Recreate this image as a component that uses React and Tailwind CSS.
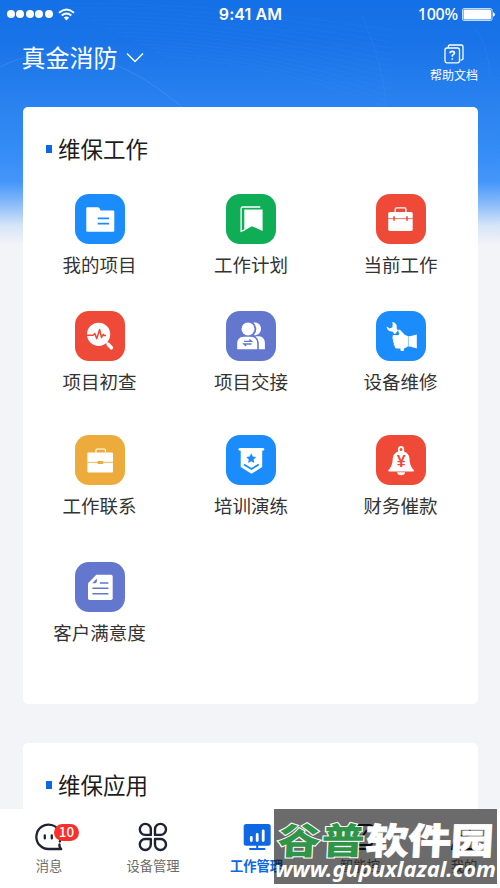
const services = [
  { name: "我的项目", bg: "bg-[#1b8cfb]", icon: FolderIcon },
  { name: "工作计划", bg: "bg-[#0fad56]", icon: BookmarkIcon },
  { name: "当前工作", bg: "bg-[#ef4a37]", icon: ToolboxIcon },
  { name: "项目初查", bg: "bg-[#ef4a37]", icon: InspectIcon },
  { name: "项目交接", bg: "bg-[#6377cf]", icon: HandoverIcon },
  { name: "设备维修", bg: "bg-[#1b8cfb]", icon: RepairIcon },
  { name: "工作联系", bg: "bg-[#ecab3a]", icon: BriefcaseIcon },
  { name: "培训演练", bg: "bg-[#1b8cfb]", icon: BadgeIcon },
  { name: "财务催款", bg: "bg-[#ef4a37]", icon: BellIcon },
  { name: "客户满意度", bg: "bg-[#6377cf]", icon: DocIcon },
];

const tabs = [
  { name: "消息", icon: ChatIcon, badge: 10 },
  { name: "设备管理", icon: CloverIcon },
  { name: "工作管理", icon: BoardIcon, active: true },
  { name: "智能控", icon: ControlIcon },
  { name: "我的", icon: UserIcon },
];

export default function App() {
  return (
    <div className="relative flex h-[888px] w-[500px] flex-col overflow-hidden bg-[#f3f4f8] font-['Noto_Sans_CJK_SC',sans-serif]">
      <Backdrop />
      <StatusBar />
      <Header />
      <main className="relative min-h-0 flex-1 overflow-hidden px-[22.5px]">
        <section className="h-[597px] rounded-[5px] bg-white">
          <SectionTitle>维保工作</SectionTitle>
          <div className="grid grid-cols-[154px_149px_150px] grid-rows-[117px_123.5px_127px_100px] pt-[28px]">
            {services.map((item) => (
              <Service key={item.name} {...item} />
            ))}
          </div>
        </section>
        <section className="mt-[39px] h-40 rounded-[5px] bg-white">
          <SectionTitle>维保应用</SectionTitle>
        </section>
      </main>
      <TabBar />
      <Watermark />
    </div>
  );
}

// blue header area with faint wave lines, fading into the page grey
function Backdrop() {
  return (
    <div className="absolute inset-x-0 top-0 h-[245px] bg-[linear-gradient(180deg,#1470e6_0px,#1973e8_40px,#2a83ef_107px,#348cf6_150px,#4596fa_182px,#8dbdf9_205px,#d4e4f8_225px,#f3f4f8_245px)]">
      <svg className="h-[107px] w-full" viewBox="0 0 500 107" fill="none" stroke="#fff">
        <path d="M0 67Q85 25 182 107" strokeOpacity=".1" />
        <path d="M362 15Q385 70 386 107M475 28Q488 45 490 75" strokeOpacity=".04" />
        {Array.from({ length: 14 }, (_, i) => (
          <path key={i} d={`M${60 + i * 8} ${4 + i * 4}Q${200 + i * 6} ${i * 5} ${390} ${30 + i * 6}`} strokeOpacity=".025" />
        ))}
      </svg>
    </div>
  );
}

function StatusBar() {
  return (
    <div className="relative grid h-7 grid-cols-3 items-center pl-[7px] pr-[5px] text-white">
      <div className="flex items-center gap-[1.4px]">
        {[0, 1, 2, 3, 4].map((dot) => (
          <span key={dot} className="size-2 rounded-full bg-white" />
        ))}
        <svg className="ml-1 h-[13px] w-[17px]" viewBox="0 0 17 13" fill="none" stroke="#fff" strokeWidth="1.9">
          <path d="M1 4.7Q8.5-1.8 16 4.7M3.7 7.4Q8.5 3.4 13.3 7.4" />
          <path d="M5.8 9.6Q8.5 7.5 11.2 9.6L8.5 12.5Z" fill="#fff" stroke="none" />
        </svg>
      </div>
      <span className="-ml-px pb-px text-center font-['Inter',sans-serif] text-[16px] font-semibold leading-none tracking-[0.1px]">9:41 AM</span>
      <div className="flex items-center justify-end gap-[4px]">
        <span className="font-['Noto_Sans',sans-serif] text-[16px] font-medium leading-none tracking-[-0.2px]">100%</span>
        <svg className="h-[13px] w-[33px]" viewBox="0 0 33 13" fill="#fff">
          <rect x=".5" y=".5" width="29.5" height="12" rx="1.5" fill="none" stroke="#fff" strokeOpacity=".75" />
          <rect x="1.5" y="1.5" width="27.5" height="10" rx="1" />
          <path d="M31 4.3Q33 5 33 6.5T31 8.7Z" />
        </svg>
      </div>
    </div>
  );
}

function Header() {
  return (
    <header className="relative flex h-[79px] items-start justify-between pl-[21.5px] pr-[22px] text-white">
      <div className="flex items-center gap-[8px] pt-[11px]">
        <h1 className="text-[24px] leading-9">真金消防</h1>
        <svg className="h-[11px] w-[18px]" viewBox="0 0 18 11" fill="none" stroke="#fff" strokeWidth="1.4">
          <path d="M1 1.5L9 9.5L17 1.5" />
        </svg>
      </div>
      <div className="flex flex-col items-center pt-[16px]">
        <svg className="h-5 w-5" viewBox="0 0 20 20" fill="none" stroke="#fff" strokeWidth="1.3">
          <rect x="1" y="4" width="14.5" height="14.8" rx="2" />
          <path d="M4.3 3.5V2.8Q4.3 1 6 1H17Q19 1 19 3V14.5Q19 16 16.5 16" />
          <path d="M6 9.2Q6 7.4 8.2 7.4T10.5 9.1Q10.5 10.3 8.3 11.4V12.8M8.3 14.2V15.8" strokeWidth="1.6" />
        </svg>
        <span className="mt-0.5 text-[12px] leading-[18px]">帮助文档</span>
      </div>
    </header>
  );
}

function SectionTitle({ children }) {
  return (
    <div className="flex items-center gap-[6px] pl-[23.5px] pt-[24px]">
      <span className="h-2 w-1.5 bg-[#0d66e4]" />
      <h2 className="-mt-px text-[22.5px] leading-9 text-[#1c1c1c]">{children}</h2>
    </div>
  );
}

function Service({ name, bg, icon: Icon }) {
  return (
    <div className="flex flex-col items-center">
      <div className={`size-[50px] shrink-0 rounded-[14px] ${bg}`}>
        <Icon />
      </div>
      <span className="mt-[6px] whitespace-nowrap text-[18.5px] leading-7 text-[#333]">{name}</span>
    </div>
  );
}

function TabBar() {
  return (
    <nav className="relative grid h-[79px] shrink-0 grid-cols-[98px_110px_97px_110px_98px] bg-white">
      {tabs.map(({ name, icon: Icon, active, badge }) => (
        <div key={name} className="flex flex-col items-center pt-[13px]">
          <div className="relative">
            <Icon />
            {badge && (
              <span className="absolute left-[20px] top-[1.5px] flex h-[17px] w-[25px] items-center justify-center rounded-full bg-[#f8302b] text-[13.5px] font-medium leading-none text-white">
                {badge}
              </span>
            )}
          </div>
          <span className={`mt-[4px] whitespace-nowrap text-[13.3px] leading-5 ${active ? "font-bold text-[#0e68e4]" : "text-[#6b6b6b]"}`}>
            {name}
          </span>
        </div>
      ))}
    </nav>
  );
}

function Watermark() {
  return (
    <div className="absolute left-[273.5px] top-[809px] h-[75px] w-[223.5px] bg-[#000]/58">
      <svg className="h-full w-full" viewBox="0 0 223.5 75">
        <g className="font-['Noto_Sans_CJK_SC',sans-serif] font-black" fontSize="43" transform="translate(3 44.5) skewX(-3) scale(1 .84)">
          <text fill="#2f9548" stroke="#fff" strokeWidth="2.4" paintOrder="stroke" textLength="87">谷普</text>
          <text x="88" fill="#fff" stroke="#fff" strokeWidth=".8" textLength="128">软件园</text>
        </g>
        <text x="1" y="67.5" fill="#fff" className="font-['Noto_Sans',sans-serif] font-bold italic" fontSize="21.5" textLength="221" lengthAdjust="spacingAndGlyphs">
          www.gupuxlazal.com
        </text>
      </svg>
    </div>
  );
}

/* service icons, drawn on the 50px tile */

function FolderIcon() {
  return (
    <svg viewBox="0 0 50 50" fill="#fff">
      <path d="M12.3 13.3H23Q24.2 13.3 24.8 14.8L25.5 16.5H38.3Q39.3 16.5 39.3 17.5V36.7Q39.3 37.7 38.3 37.7H12.3Q11.3 37.7 11.3 36.7V14.3Q11.3 13.3 12.3 13.3Z" />
      <path d="M22.7 24.3H34M22.7 29.6H34" stroke="#1b8cfb" strokeWidth="1.8" />
    </svg>
  );
}

function BookmarkIcon() {
  return (
    <svg viewBox="0 0 50 50" fill="#fff">
      <path d="M18.3 15.6H36.6V37L26 32.2L18.3 36.6Z" />
      <path d="M34.3 13H16.8Q15.1 13 15.1 14.7V37.2L18.8 35.8" fill="none" stroke="#fff" strokeWidth="1.3" />
    </svg>
  );
}

function ToolboxIcon() {
  return (
    <svg viewBox="0 0 50 50" fill="#fff">
      <rect x="12.2" y="17.9" width="24.5" height="19" rx="1.6" />
      <path d="M19.3 18V15.2Q19.3 13.9 20.6 13.9H28.6Q29.9 13.9 29.9 15.2V18" fill="none" stroke="#fff" strokeWidth="1.4" />
      <path d="M12 24.6H37" stroke="#ef4a37" strokeWidth=".8" />
      <path d="M18 22.3V26.8M31 22.3V26.8" stroke="#ef4a37" strokeWidth="1.6" />
    </svg>
  );
}

function InspectIcon() {
  return (
    <svg viewBox="0 0 50 50" fill="none">
      <circle cx="23.6" cy="23.3" r="11.6" fill="#fff" />
      <path d="M31 31L33.5 33.6" stroke="#fff" strokeWidth="1.5" />
      <path d="M33.3 33.5L36.4 36.8" stroke="#fff" strokeWidth="3.6" strokeLinecap="round" />
      <path d="M11.5 24.3H18L19.8 22.6L21.8 27.6L24.6 18.5L26.5 26.5L28.3 23.3L29.2 24.5H31" stroke="#ef4a37" strokeWidth="1.5" strokeLinejoin="round" />
    </svg>
  );
}

function HandoverIcon() {
  return (
    <svg viewBox="0 0 50 50" fill="#fff">
      <path d="M27.3 11.6C32 11 35 13.8 35 17.8S32 24.6 27.7 24.3Q33.2 17.8 27.3 11.6Z" />
      <path d="M29.3 25.3H33.5Q38.9 26.5 38.9 32V38.2H32.8V31.5Q32.6 27.8 29.3 25.3Z" />
      <circle cx="22" cy="17.9" r="6.5" />
      <path d="M17.5 25.7H25Q31.2 26.2 31.2 32.5V38.2H11.2V32.5Q11.2 26.2 17.5 25.7Z" />
      <path d="M18 30.4H25.5L23.3 28.5M25.5 33H18L20.2 35" fill="none" stroke="#6377cf" strokeWidth="1.4" />
    </svg>
  );
}

// hand holding a wrench
function RepairIcon() {
  return (
    <svg viewBox="0 0 50 50" fill="#fff">
      <path d="M16.3 11C19.6 11.6 21.5 14.2 20.6 17.2L22 19.4L18.9 23.2L16.3 20.4C13.3 20.6 10.9 18.6 10.5 15.4L13.8 17.4L16.4 16.2L16.7 13.4Z" />
      <path d="M16.6 25.4Q16.4 24 18.2 24L21.8 24.2L23.4 23.2L22.2 19.8Q22.4 18 24 18.8L28.4 23.4L32 25.2H34L40.8 23.6V37.4L34 35.6H31.6Q29.8 37.2 28 37.4V39.2Q26.2 41 24.4 39.2V37.6H20.2Q18.4 37 18.6 34.8Q17.2 34 17.8 32Q16.4 30.8 17.2 29Q16 27.4 16.6 25.4Z" />
      <path d="M32.4 25.6V35.4" stroke="#1b8cfb" strokeWidth=".5" />
    </svg>
  );
}

function BriefcaseIcon() {
  return (
    <svg viewBox="0 0 50 50" fill="#fff">
      <rect x="12.4" y="17.4" width="25.6" height="20" rx="1.2" />
      <path d="M20.9 17.5V15.4Q20.9 14 22.2 14H29.2Q30.5 14 30.5 15.4V17.5" fill="none" stroke="#fff" strokeWidth="1.2" />
      <path d="M12.3 27.4H38" stroke="#ecab3a" strokeWidth=".8" />
      <rect x="22.4" y="25.9" width="6" height="3" rx="1" fill="#ecab3a" />
    </svg>
  );
}

function BadgeIcon() {
  return (
    <svg viewBox="0 0 50 50" fill="#fff">
      <rect x="12.5" y="12.9" width="25.7" height="2.8" rx="1.4" />
      <path d="M14.7 14H36.2V32L25.4 38.8L14.7 32Z" />
      <path d="M25.2 18.3L26.7 21.6L30.2 22L27.6 24.4L28.3 28L25.2 26.2L22.1 28L22.8 24.4L20.2 22L23.7 21.6Z" fill="#1b8cfb" />
      <path d="M18 29.5L25.4 34L32.8 29.5" fill="none" stroke="#1b8cfb" strokeWidth="1.8" />
    </svg>
  );
}

function BellIcon() {
  return (
    <svg viewBox="0 0 50 50" fill="#fff">
      <path fillRule="evenodd" d="M25 11Q28.3 11.2 28.2 14.6L28 16.4Q32.8 18 33.4 23Q33.6 31.5 37.8 35Q38.4 36.4 37.3 36.4H12.9Q11.8 36.4 12.4 35Q16.6 31.5 16.8 23Q17.4 18 22.1 16.4L21.9 14.6Q21.8 11.2 25 11ZM25 12.9A1.5 1.5 0 1 0 25 15.9A1.5 1.5 0 1 0 25 12.9Z" />
      <path d="M21 37.3H29.2Q28.6 40.3 25.1 40.3T21 37.3Z" />
      <text x="25.1" y="32" textAnchor="middle" fill="#ef4a37" fontSize="16" className="font-['Liberation_Sans',sans-serif] font-bold">¥</text>
    </svg>
  );
}

function DocIcon() {
  return (
    <svg viewBox="0 0 50 50" fill="#fff">
      <path d="M21.3 12.7H36Q37.7 12.7 37.7 14.4V36.2Q37.7 37.9 36 37.9H14.7Q13 37.9 13 36.2V21.3Z" />
      <path d="M17.3 21.3L21.8 16.5V19.5Q21.6 21.3 20 21.3Z" fill="#6377cf" />
      <path d="M24.8 20.9H33.4M17.4 26.2H33.4M17.4 31.7H33.4" stroke="#6377cf" strokeWidth="1.5" />
    </svg>
  );
}

/* tab bar icons */

function ChatIcon() {
  return (
    <svg className="size-[30px]" viewBox="0 0 30 30" fill="none" stroke="#1d2333" strokeWidth="2.3">
      <path d="M25.8 19.5A12.2 12.2 0 1 0 15 27H27.3Q25 25 25.5 22.5" strokeLinejoin="round" strokeLinecap="round" />
      <path d="M10.8 13.4V16.4M17.8 13.4V16.4" strokeLinecap="round" />
    </svg>
  );
}

function CloverIcon() {
  return (
    <svg className="size-[30px]" viewBox="0 0 30 30" fill="none" stroke="#1d2333" strokeWidth="2.4">
      <path d="M12.8 12.9H7.2A5.5 5.5 0 1 1 12.8 7.3ZM17 12.9H22.6A5.5 5.5 0 1 0 17 7.3ZM12.8 17H7.2A5.5 5.5 0 1 0 12.8 22.6ZM17 17H22.6A5.5 5.5 0 1 1 17 22.6Z" strokeLinejoin="round" />
    </svg>
  );
}

function BoardIcon() {
  return (
    <svg className="size-[30px]" viewBox="0 0 30 30" fill="#0e68e4">
      <rect x="1.7" y="2" width="27" height="21.7" rx="2.5" />
      <path d="M9.3 15.3V18.5M15.2 12.5V18.5M21.2 9V18.5" stroke="#fff" strokeWidth="2.8" strokeLinecap="round" />
      <path d="M15.2 23V27M8 27H22.5" stroke="#0e68e4" strokeWidth="2" strokeLinecap="round" />
    </svg>
  );
}

function ControlIcon() {
  return (
    <svg className="size-[30px]" viewBox="0 0 30 30" fill="none" stroke="#1d2333" strokeWidth="2">
      <rect x="3" y="3" width="24" height="20" rx="2" />
      <path d="M8 18L13 12L17 15L22 8M8 27H22" />
    </svg>
  );
}

function UserIcon() {
  return (
    <svg className="size-[30px]" viewBox="0 0 30 30" fill="none" stroke="#1d2333" strokeWidth="2">
      <circle cx="15" cy="9" r="6" />
      <path d="M3 27Q4 17 15 17T27 27Z" />
    </svg>
  );
}
